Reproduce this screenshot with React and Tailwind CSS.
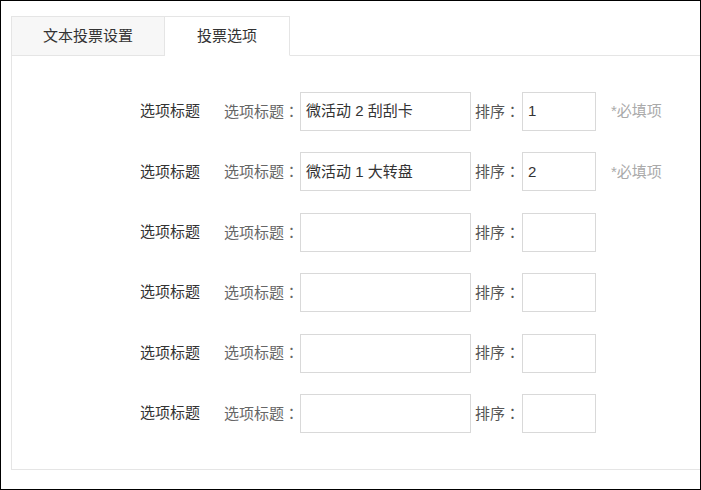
import React from 'react';

const rows = [
    { title: '微活动 2 刮刮卡', sort: '1', required: true },
    { title: '微活动 1 大转盘', sort: '2', required: true },
    { title: '', sort: '', required: false },
    { title: '', sort: '', required: false },
    { title: '', sort: '', required: false },
    { title: '', sort: '', required: false },
];

// full-width colon centred in its cell, as in the reference
const Colon = () => (
    <span style={{ fontFamily: '"Noto Sans CJK TC", sans-serif' }}>：</span>
);

const OptionRow = ({ title, sort, required }) => (
    <div className="flex items-center h-[39px]">
        <span className="w-[188px] text-right text-[#333]">选项标题</span>
        <span className="ml-[24px] w-[76px] text-[#666] whitespace-nowrap">
            选项标题<Colon />
        </span>
        <div className="w-[171px] h-[39px] border border-[#d9d9d9] flex items-center pl-[5px] text-[#333] whitespace-pre">
            {title}
        </div>
        <span className="ml-[4px] w-[47px] text-[#555] whitespace-nowrap">
            排序<Colon />
        </span>
        <div className="w-[74px] h-[39px] border border-[#d9d9d9] flex items-center pl-[5px] text-[#333]">
            {sort}
        </div>
        {required && <span className="ml-[15px] text-[#aaa]">*必填项</span>}
    </div>
);

export default function App() {
    return (
        <div
            className="w-[701px] h-[490px] border border-black bg-white text-[15px] pt-[15px] pl-[10px]"
            style={{ fontFamily: '"Liberation Sans", "Noto Sans CJK SC", sans-serif' }}
        >
            {/* Tabs */}
            <div className="flex h-[40px] border-b border-[#e5e5e5]">
                <button className="w-[154px] h-[40px] bg-[#f7f7f7] border border-[#e5e5e5] text-[#333] mb-[-1px]">
                    文本投票设置
                </button>
                <button className="w-[125px] h-[40px] bg-white border border-l-0 border-[#e5e5e5] border-b-white text-[#333] mb-[-1px]">
                    投票选项
                </button>
            </div>

            {/* Panel */}
            <div className="border-l border-b border-[#e5e5e5] h-[414px] pt-[36px] flex flex-col gap-[21.4px]">
                {rows.map((row, i) => (
                    <OptionRow key={i} {...row} />
                ))}
            </div>
        </div>
    );
}
